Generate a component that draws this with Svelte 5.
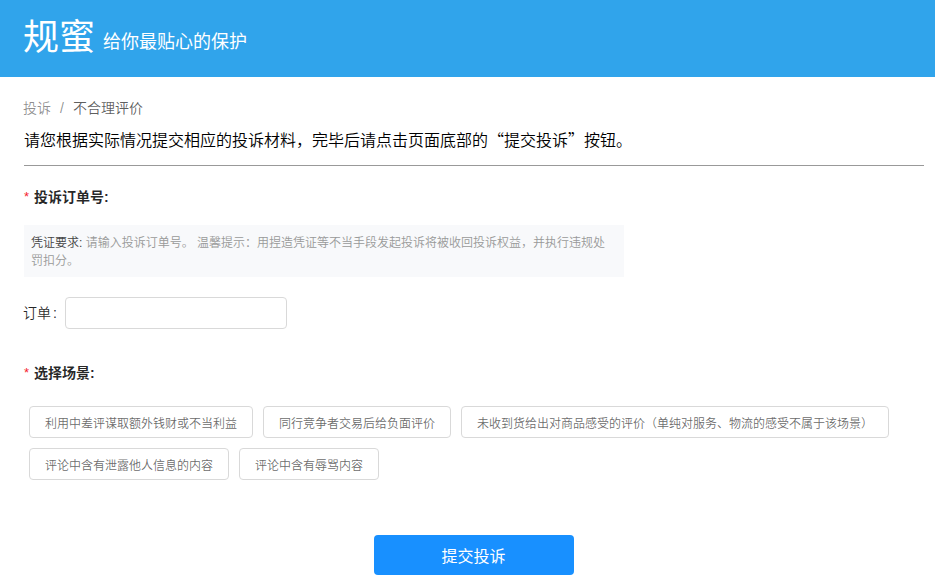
<script lang="ts">
  const scenes = [
    '利用中差评谋取额外钱财或不当利益',
    '同行竞争者交易后给负面评价',
    '未收到货给出对商品感受的评价（单纯对服务、物流的感受不属于该场景）',
    '评论中含有泄露他人信息的内容',
    '评论中含有辱骂内容'
  ];

  let order = $state('');
  let selected = $state('');
</script>

<header class="header">
  <span class="logo">规蜜</span>
  <span class="slogan">给你最贴心的保护</span>
</header>

<main class="content">
  <nav class="breadcrumb">
    <span>投诉</span>
    <span class="separator">/</span>
    <span class="current">不合理评价</span>
  </nav>
  <p class="intro">请您根据实际情况提交相应的投诉材料，完毕后请点击页面底部的“提交投诉”按钮。</p>

  <h2><span class="required">*</span>投诉订单号:</h2>
  <div class="hint">
    <span class="hint-title">凭证要求:</span> 请输入投诉订单号。 温馨提示：用捏造凭证等不当手段发起投诉将被收回投诉权益，并执行违规处罚扣分。
  </div>
  <div class="field">
    <label for="order">订单<span class="colon">:</span></label>
    <input id="order" type="text" bind:value={order} />
  </div>

  <h2><span class="required">*</span>选择场景:</h2>
  <div class="scenes">
    {#each scenes as scene}
      <button class="scene" class:active={selected === scene} onclick={() => (selected = scene)}>{scene}</button>
    {/each}
  </div>

  <button class="submit">提交投诉</button>
</main>

<style>
  :global(body) {
    background: #fff;
    font-family: 'Liberation Sans', 'Noto Sans CJK SC', sans-serif;
    font-size: 14px;
    color: rgba(0, 0, 0, 0.85);
  }

  button,
  input {
    box-sizing: border-box;
    font-family: inherit;
  }

  .header {
    display: flex;
    gap: 8px;
    height: 77px;
    padding-left: 23px;
    box-sizing: border-box;
    background: #30a4eb;
    color: #fff;
    white-space: nowrap;
  }

  .logo {
    font-size: 36px;
    line-height: 76px;
  }

  .slogan {
    font-size: 18px;
    line-height: 84px;
  }

  .content {
    width: 900px;
    padding: 20px 0 4px 24px;
    font-weight: 350;
  }

  .breadcrumb {
    display: flex;
    margin-left: -1px;
    line-height: 22px;
    color: rgba(0, 0, 0, 0.45);
  }

  .separator {
    margin: 0 8px 0 9px;
    width: 5px;
  }

  .current {
    color: rgba(0, 0, 0, 0.65);
  }

  .intro {
    margin: 0;
    height: 46px;
    border-bottom: 1px solid #999;
    font-family: 'Noto Sans CJK SC', sans-serif;
    font-size: 16px;
    line-height: 41px;
    color: #000;
  }

  h2 {
    display: flex;
    margin: 20px 0 17px;
    font-size: 14px;
    font-weight: bold;
    line-height: 22px;
  }

  .required {
    width: 10px;
    color: #f5222d;
    font-size: 13px;
    font-weight: normal;
  }

  .hint {
    width: 600px;
    box-sizing: border-box;
    padding: 9px 9px 7px 7px;
    background: #f8f9fb;
    font-size: 12px;
    line-height: 18px;
    color: #999;
  }

  .hint-title {
    color: #444;
  }

  .field {
    display: flex;
    align-items: center;
    margin: 20px 0 33px;
  }

  label {
    margin: 0 1px 2px -1px;
  }

  .colon {
    margin: 0 7px 0 2px;
  }

  input {
    width: 222px;
    height: 32px;
    padding: 4px 11px;
    border: 1px solid #d9d9d9;
    border-radius: 4px;
    font-size: 14px;
  }

  .scenes {
    display: flex;
    flex-wrap: wrap;
    gap: 10px;
    margin: 22px 0 55px 5px;
  }

  .scene {
    height: 32px;
    padding: 0 15px;
    border: 1px solid #d9d9d9;
    border-radius: 4px;
    background: #fff;
    font-size: 12px;
    font-weight: 350;
    color: rgba(0, 0, 0, 0.6);
    white-space: nowrap;
  }

  .scene.active {
    border-color: #1890ff;
    color: #1890ff;
  }

  .submit {
    display: block;
    width: 200px;
    height: 40px;
    margin: 0 auto;
    padding: 0 1px 1px 0;
    border: 0;
    border-radius: 4px;
    background: #1890ff;
    color: #fff;
    font-size: 16px;
  }
</style>
